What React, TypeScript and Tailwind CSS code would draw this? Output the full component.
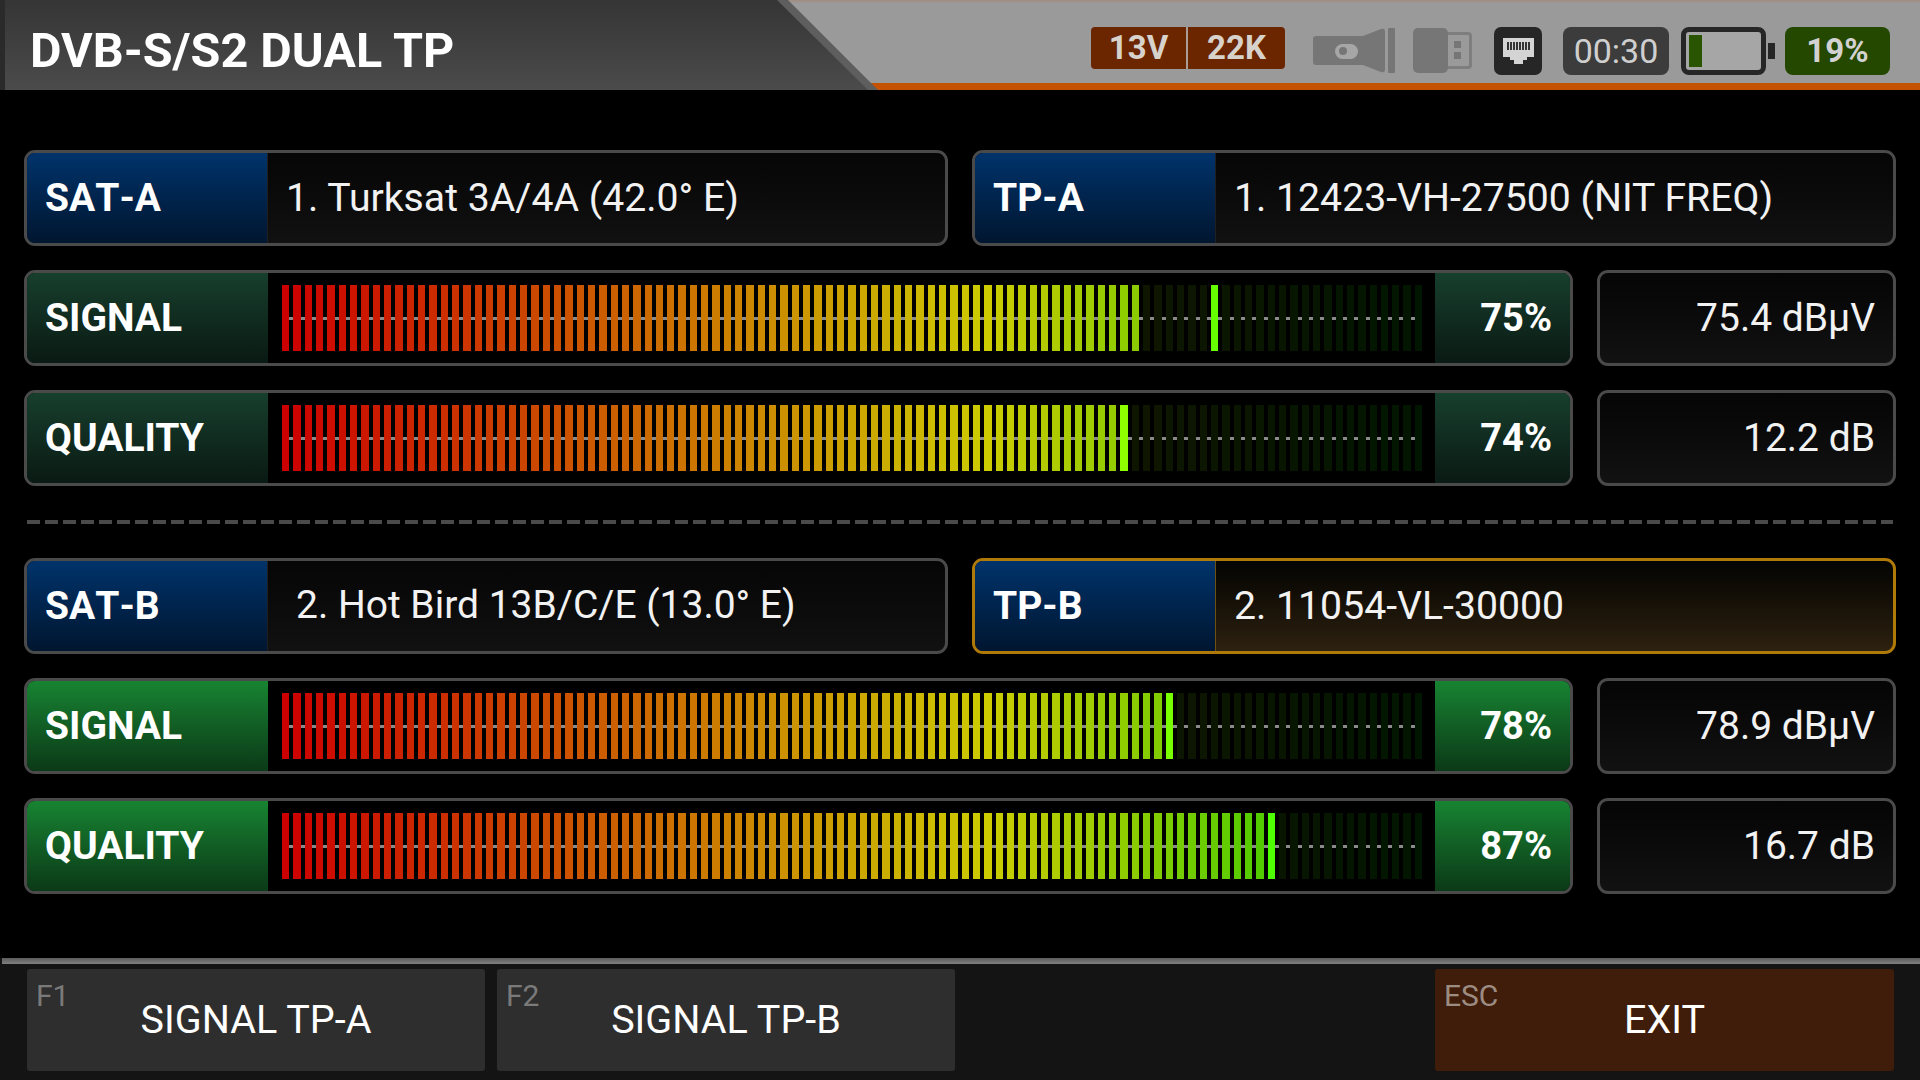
const BAR_COUNT = 101;

// colour of one meter bar: red -> yellow -> green
function barRgb(i: number) {
  const g = i < 62 ? Math.round((204 * i) / 62) : 204;
  const r = i < 62 ? 204 : Math.max(0, Math.round(204 * (1 - (i - 62) / 40)));
  return { r, g };
}

function barColor(i: number, value: number, peak: number) {
  const { r, g } = barRgb(i);
  if (i === peak) return `rgb(${r},255,0)`;
  if (i <= value) return `rgb(${r},${g},0)`;
  return `rgb(${Math.round(r * 0.11)},${Math.max(20, Math.round(g * 0.11))},0)`;
}

function Meter({ value, peak }: { value: number; peak: number }) {
  return (
    <div className="relative flex-1 h-full flex items-center pl-[14px] bg-black">
      <div className="absolute left-[20px] right-[19px] top-[44px] h-[3px] bg-[#8a8a8a]" />
      <div className="relative flex gap-[4px] h-[66px]">
        {Array.from({ length: BAR_COUNT }, (_, i) => (
          <div key={i} className="w-[7.33px] h-full" style={{ background: barColor(i, value, peak) }} />
        ))}
      </div>
    </div>
  );
}

function InfoRow({
  label,
  text,
  indent,
  active,
}: {
  label: string;
  text: string;
  indent?: boolean;
  active?: boolean;
}) {
  return (
    <div
      className={`flex-1 h-[96px] flex rounded-[11px] border-[3px] overflow-hidden ${
        active ? 'border-[#b07a08] bg-gradient-to-b from-[#050503] to-[#2e2110]' : 'border-[#4a4a4a] bg-gradient-to-b from-[#060606] to-[#111111]'
      }`}
    >
      <div
        className={`w-[241px] h-full flex items-center pl-[18px] border-r text-[39px] font-bold text-white bg-gradient-to-b from-[#00336b] to-[#001630] ${
          active ? 'border-[#6e5010]' : 'border-[#202020]'
        } ${label.startsWith('SAT') ? '[font-kerning:none]' : ''}`}
      >
        {label}
      </div>
      <div className={`flex items-center text-[39.2px] text-[#f2f2f2] ${indent ? 'pl-[28px] pb-[2px] text-[39px]' : 'pl-[18px]'}`}>{text}</div>
    </div>
  );
}

function SignalRow({
  label,
  value,
  peak,
  reading,
  bright,
}: {
  label: string;
  value: number;
  peak: number;
  reading: string;
  bright?: boolean;
}) {
  const tone = bright ? 'from-[#178432] to-[#0b3a17]' : 'from-[#173f2d] to-[#0a1a14]';
  return (
    <div className="flex gap-[24px]">
      <div className="w-[1549px] h-[96px] flex rounded-[11px] border-[3px] border-[#4a4a4a] overflow-hidden">
        <div className={`w-[241px] h-full flex items-center pl-[18px] text-[39px] font-bold text-white bg-gradient-to-b ${tone}`}>
          {label}
        </div>
        <Meter value={value} peak={peak} />
        <div className={`w-[135px] h-full flex items-center justify-end pr-[18px] text-[38px] font-bold text-white bg-gradient-to-b ${tone}`}>
          {value}%
        </div>
      </div>
      <div className="w-[299px] h-[96px] flex items-center justify-end pr-[18px] rounded-[11px] border-[3px] border-[#4a4a4a] bg-gradient-to-b from-[#050505] to-[#121212] text-[39px] text-[#f2f2f2]">
        {reading}
      </div>
    </div>
  );
}

function FnButton({ keyName, label, exit }: { keyName: string; label: string; exit?: boolean }) {
  return (
    <div
      className={`relative h-[102px] flex items-center justify-center rounded-[3px] text-[39.5px] text-white ${
        exit ? 'w-[459px] ml-auto bg-[#401d0a]' : 'w-[458px] bg-[#2e2e2e]'
      }`}
    >
      <span className={`absolute left-[9px] top-[4px] text-[30px] ${exit ? 'text-[#9c8c82]' : 'text-[#7a7a7a]'}`}>{keyName}</span>
      {label}
    </div>
  );
}

function TorchIcon() {
  return (
    <svg width="82" height="45" viewBox="0 0 82 45" className="mt-[1px]">
      <path d="M3 8 H50 L68 1 Q72 0 72 3 V42 Q72 45 68 44 L50 37 H3 Q0 37 0 34 V11 Q0 8 3 8 Z" fill="#767676" />
      <rect x="75" y="0" width="7" height="45" rx="1" fill="#767676" />
      <rect x="22" y="16" width="23" height="15" rx="7.5" fill="#a6a6a6" />
      <circle cx="30" cy="23" r="4" fill="#767676" />
    </svg>
  );
}

function UsbIcon() {
  return (
    <svg width="59" height="45" viewBox="0 0 59 45" className="mt-[1px]">
      <rect x="0" y="0" width="35" height="45" rx="5" fill="#767676" />
      <path d="M35 5.5 H55 Q57.5 5.5 57.5 8 V37 Q57.5 39.5 55 39.5 H35" fill="none" stroke="#7e7e7e" strokeWidth="3" />
      <rect x="41" y="13" width="7" height="7" fill="#767676" />
      <rect x="41" y="24" width="7" height="7" fill="#767676" />
    </svg>
  );
}

function EthernetIcon() {
  return (
    <div className="w-[48px] h-[48px] rounded-[7px] bg-[#262626] flex items-center justify-center">
      <svg width="48" height="48" viewBox="0 0 48 48">
        <path d="M9 11 H40 V30 H33 V33 H29 V37 H20 V33 H16 V30 H9 Z" fill="#d4d4d4" />
        {[13, 16, 19, 22, 25, 28, 31, 34].map((x) => (
          <rect key={x} x={x} y="15" width="2" height="8" fill="#333333" />
        ))}
      </svg>
    </div>
  );
}

function Battery() {
  return (
    <div className="flex items-center">
      <div className="w-[85px] h-[48px] rounded-[8px] border-[5px] border-[#262626] bg-[#a6a6a6] p-[3px]">
        <div className="w-[13px] h-full bg-[#2a5500]" />
      </div>
      <div className="w-[7px] h-[16px] ml-[2px] bg-[#262626]" />
    </div>
  );
}

export default function App() {
  return (
    <div className="w-[1920px] h-[1080px] bg-black flex flex-col overflow-hidden font-['Roboto',sans-serif]">
      {/* Title bar */}
      <header className="h-[90px] flex bg-gradient-to-b from-[#a08c80] from-[0%] to-[#9a9a9a] to-[4%] border-b-[7px] border-[#c45200]">
        <div className="w-[878px] h-[90px] shrink-0 bg-[#5e5e5e] [clip-path:polygon(0_0,788px_0,878px_90px,0_90px)]">
          <div className="w-full h-full flex items-center pl-[25px] pt-[12px] border-l-[5px] border-[#2a2a2a] bg-gradient-to-b from-[#353535] to-[#4b4b4b] text-[48.5px] font-bold text-white [clip-path:polygon(0_0,777px_0,868px_90px,0_90px)]">
            DVB-S/S2 DUAL TP
          </div>
        </div>
        <div className="ml-auto flex items-start pt-[27px] pr-[30px]">
          <div className="flex h-[42px] rounded-[4px] bg-[#6b2600] text-[33px] font-bold text-[#d8d2cc]">
            <div className="w-[97px] flex items-center justify-center border-r-2 border-[#a89c94]">13V</div>
            <div className="w-[97px] flex items-center justify-center">22K</div>
          </div>
          <div className="ml-[28px]"><TorchIcon /></div>
          <div className="ml-[18px]"><UsbIcon /></div>
          <div className="ml-[22px]"><EthernetIcon /></div>
          <div className="ml-[21px] w-[106px] h-[48px] rounded-[8px] bg-[#3c3c3c] flex items-center justify-center text-[34px] text-[#cfcfcf]">
            00:30
          </div>
          <div className="ml-[12px]"><Battery /></div>
          <div className="ml-[10px] w-[105px] h-[48px] rounded-[8px] bg-[#254800] flex items-center justify-center text-[33px] font-bold text-[#d2d2d2]">
            19%
          </div>
        </div>
      </header>

      {/* Signal panels */}
      <main className="flex flex-col pt-[60px] pl-[24px] pr-[24px]">
        <div className="flex flex-col gap-[24px]">
          <div className="flex gap-[24px]">
            <InfoRow label="SAT-A" text="1. Turksat 3A/4A (42.0° E)" />
            <InfoRow label="TP-A" text="1. 12423-VH-27500 (NIT FREQ)" />
          </div>
          <SignalRow label="SIGNAL" value={75} peak={82} reading="75.4 dBµV" />
          <SignalRow label="QUALITY" value={74} peak={74} reading="12.2 dB" />
        </div>

        <div className="mt-[34px] mb-[34px] mx-[3px] h-[4px] bg-[repeating-linear-gradient(90deg,#4a4a4a_0,#4a4a4a_13px,transparent_13px,transparent_18px)]" />

        <div className="flex flex-col gap-[24px]">
          <div className="flex gap-[24px]">
            <InfoRow label="SAT-B" text="2. Hot Bird 13B/C/E (13.0° E)" indent />
            <InfoRow label="TP-B" text="2. 11054-VL-30000" active />
          </div>
          <SignalRow label="SIGNAL" value={78} peak={78} reading="78.9 dBµV" bright />
          <SignalRow label="QUALITY" value={87} peak={87} reading="16.7 dB" bright />
        </div>
      </main>

      {/* Function keys */}
      <footer className="mt-auto h-[122px] bg-[#141414]">
        <div className="h-[6px] ml-[2px] bg-gradient-to-b from-[#5c5c5c] to-[#808080]" />
        <div className="flex gap-[12px] pt-[5px] pl-[27px] pr-[26px]">
          <FnButton keyName="F1" label="SIGNAL TP-A" />
          <FnButton keyName="F2" label="SIGNAL TP-B" />
          <FnButton keyName="ESC" label="EXIT" exit />
        </div>
      </footer>
    </div>
  );
}
